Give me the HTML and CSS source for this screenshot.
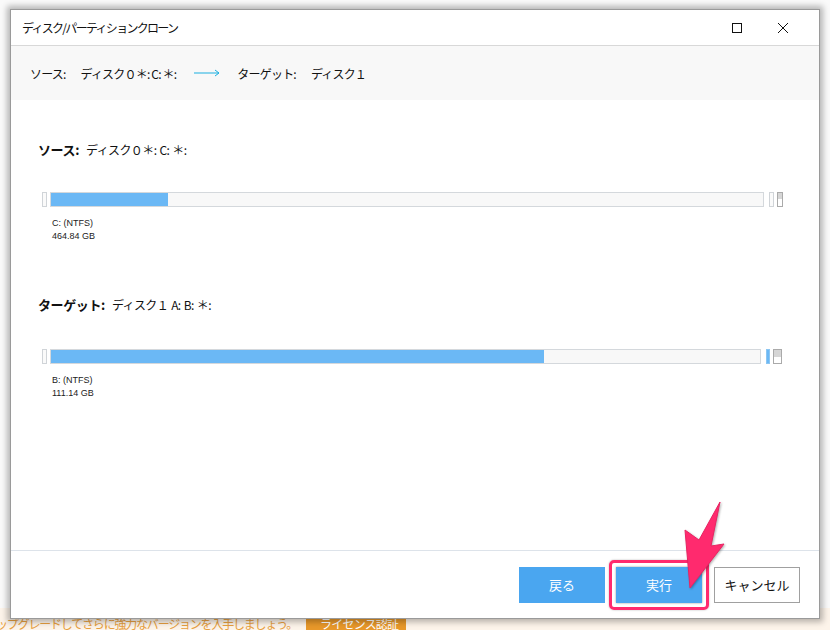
FILE: index.html
```html
<!DOCTYPE html>
<html lang="ja">
<head>
    <meta charset="UTF-8">
    <title>ディスク/パーティションクローン</title>
    <link rel="stylesheet" href="styles.css">
</head>
<body>
    <div class="desktop">
        <div class="banner">
            <span class="banner-text">ップグレードしてさらに強力なバージョンを入手しましょう。</span>
            <span class="banner-btn">ライセンス認証</span>
        </div>

        <div class="dialog">
            <div class="titlebar">
                <span class="title">ディスク/パーティションクローン</span>
                <div class="win-buttons">
                    <svg width="12" height="12" viewBox="0 0 12 12"><rect x="1.5" y="1.5" width="9" height="9" fill="none" stroke="#111" stroke-width="1"/></svg>
                    <svg width="12" height="12" viewBox="0 0 12 12"><path d="M1 1 L11 11 M11 1 L1 11" stroke="#111" stroke-width="1"/></svg>
                </div>
            </div>

            <div class="summary">
                <span class="sum-label">ソース:</span>
                <span>ディスク０＊: C: ＊:</span>
                <svg class="arrow" width="26" height="8" viewBox="0 0 26 8"><path d="M0 4 H25 M21 1 L25 4 L21 7" fill="none" stroke="#1aafe0" stroke-width="1"/></svg>
                <span class="sum-label">ターゲット:</span>
                <span>ディスク１</span>
            </div>

            <div class="body">
                <div class="disk">
                    <h2><b>ソース:</b> ディスク０＊: C: ＊:</h2>
                    <div class="bar-row">
                        <div class="stub"></div>
                        <div class="bar"><div class="fill" style="width: 16.5%"></div></div>
                        <div class="stub"></div>
                        <div class="stub dark"></div>
                    </div>
                    <div class="part-info">
                        <div>C: (NTFS)</div>
                        <div>464.84 GB</div>
                    </div>
                </div>

                <div class="disk">
                    <h2><b>ターゲット:</b> ディスク１ A: B: ＊:</h2>
                    <div class="bar-row">
                        <div class="stub"></div>
                        <div class="bar target"><div class="fill" style="width: 69.5%"></div></div>
                        <div class="stub blue"></div>
                        <div class="stub dark wide"></div>
                    </div>
                    <div class="part-info">
                        <div>B: (NTFS)</div>
                        <div>111.14 GB</div>
                    </div>
                </div>
            </div>

            <div class="footer">
                <button class="btn primary">戻る</button>
                <div class="highlight">
                    <button class="btn primary">実行</button>
                </div>
                <button class="btn">キャンセル</button>
            </div>
        </div>

        <svg class="pointer" width="50" height="90" viewBox="0 0 50 90">
            <polygon points="44,2 35,46 48,44 14,88 9,30 23,40" fill="#ff2a6e" stroke="#e82462" stroke-width="1" stroke-linejoin="round"/>
        </svg>
    </div>
</body>
</html>
```

FILE: styles.css
```css
* {
    box-sizing: border-box;
    margin: 0;
    padding: 0;
}

body {
    width: 830px;
    height: 630px;
    overflow: hidden;
    background: #ffffff;
    font-family: "Noto Sans CJK JP", "Liberation Sans", sans-serif;
    color: #111;
}

.desktop {
    position: relative;
    width: 830px;
    height: 630px;
    background: #fafafa;
}

.banner {
    position: absolute;
    left: 0;
    bottom: 0;
    width: 830px;
    height: 22px;
    display: flex;
    align-items: flex-end;
    gap: 9px;
    background: #fdf4ea;
}

.banner-text {
    color: #e8a040;
    font-size: 12px;
    line-height: 12px;
    letter-spacing: -1.2px;
    margin-left: -4px;
}

.banner-btn {
    background: #e8982a;
    color: #fff;
    font-size: 12px;
    line-height: 12px;
    height: 12px;
    width: 100px;
    letter-spacing: -0.8px;
    padding: 0 0 0 14px;
    white-space: nowrap;
}

.dialog {
    position: absolute;
    left: 10px;
    top: 9px;
    width: 810px;
    height: 610px;
    background: #fff;
    border: 1px solid #9a9a9a;
    box-shadow: 0 0 6px 3px rgba(0, 0, 0, 0.28);
    display: flex;
    flex-direction: column;
}

.titlebar {
    height: 36px;
    flex: none;
    display: flex;
    align-items: center;
    justify-content: space-between;
    border-bottom: 1px solid #d8d8d8;
    padding: 0 30px 0 11px;
}

.title {
    font-size: 12px;
    letter-spacing: -1.7px;
}

.win-buttons {
    display: flex;
    gap: 34px;
}

.win-buttons svg {
    display: block;
}

.summary {
    height: 54px;
    flex: none;
    background: #f8f8f8;
    display: flex;
    align-items: center;
    padding: 0 0 0 19px;
    font-size: 12px;
    letter-spacing: -0.8px;
}

.summary span {
    margin-right: 15px;
}

.summary .arrow {
    margin: 0 17px 0 3px;
}

.body {
    flex: 1;
    padding: 42px 0 0 27px;
    display: flex;
    flex-direction: column;
    gap: 54px;
}

.disk h2 {
    font-size: 12px;
    font-weight: normal;
    line-height: 16px;
    letter-spacing: -0.6px;
    word-spacing: 1px;
}

.disk h2 b {
    font-size: 13px;
    margin-right: 4px;
    letter-spacing: -0.4px;
}

.bar-row {
    display: flex;
    align-items: stretch;
    gap: 3px;
    height: 15px;
    margin: 34px 0 0 4px;
}

.disk + .disk .bar-row {
    margin-top: 36px;
}

.stub {
    width: 5px;
    border: 1px solid #d0d4d8;
    background: #fafafa;
}

.stub.blue {
    width: 4px;
    background: #6bb8f5;
    border-color: #8cc6f2;
}

.stub.dark {
    width: 6px;
    border-color: #aaa;
    background: linear-gradient(#d6d6d6 50%, #fff 50%);
}

.stub.wide {
    width: 9px;
}

.bar {
    width: 714px;
    border: 1px solid #d4d8dc;
    background: #f8f8f8;
    margin-right: 2px;
}

.bar.target {
    width: 711px;
}

.fill {
    height: 100%;
    background: #6bb8f5;
}

.part-info {
    margin: 10px 0 0 14px;
    font-size: 9px;
    line-height: 13px;
    color: #222;
    font-family: "Liberation Sans", sans-serif;
}

.footer {
    height: 68px;
    flex: none;
    border-top: 1px solid #dde3ea;
    display: flex;
    align-items: center;
    justify-content: flex-end;
    gap: 9px;
    padding: 0 19px 0 0;
}

.btn {
    width: 86px;
    height: 36px;
    font-family: "Noto Sans CJK JP", sans-serif;
    font-size: 13px;
    background: #fff;
    color: #111;
    border: 1px solid #a0a0a0;
    cursor: pointer;
}

.btn.primary {
    background: #4aa6f0;
    color: #fff;
    border: none;
}

.highlight {
    padding: 4px;
    border: 3px solid #ff2a6e;
    border-radius: 5px;
    margin: 0 -4px 0 -5px;
    box-shadow: 0 0 2px rgba(0, 0, 0, 0.3);
}

.highlight .btn {
    display: block;
    box-shadow: 0 0 2px rgba(0, 0, 0, 0.4);
}

.pointer {
    position: absolute;
    left: 676px;
    top: 500px;
    filter: drop-shadow(1px 1px 1px rgba(0, 0, 0, 0.3));
}
```
